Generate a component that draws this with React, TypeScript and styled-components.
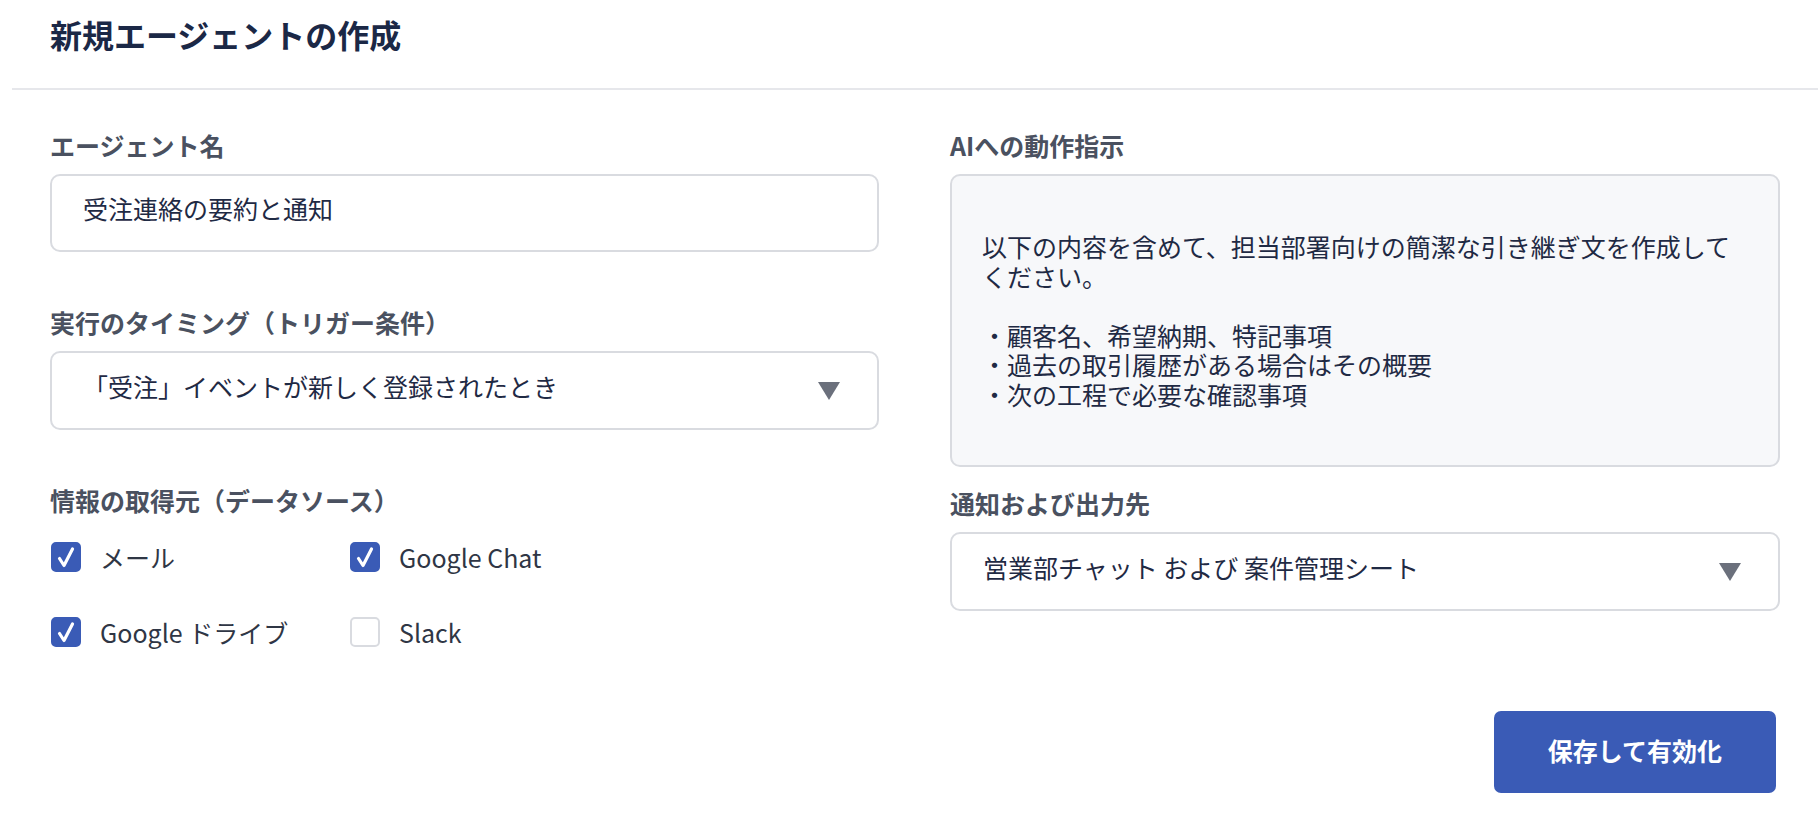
import React from "react";
import styled, { createGlobalStyle } from "styled-components";

const GlobalStyle = createGlobalStyle`
  html, body {
    margin: 0;
    padding: 0;
    background: #ffffff;
  }
  body {
    font-family: "Noto Sans CJK JP", "Noto Sans", sans-serif;
    color: #1f2a44;
  }
  * {
    box-sizing: border-box;
  }
`;

const sources = [
  { label: "メール", checked: true },
  { label: "Google Chat", checked: true },
  { label: "Google ドライブ", checked: true },
  { label: "Slack", checked: false },
];

const instruction = `以下の内容を含めて、担当部署向けの簡潔な引き継ぎ文を作成してください。

・顧客名、希望納期、特記事項
・過去の取引履歴がある場合はその概要
・次の工程で必要な確認事項`;

const Caret = () => (
  <svg width="22" height="18" viewBox="0 0 22 18">
    <polygon points="0,0 22,0 11,18" fill="#6b707c" />
  </svg>
);

const Tick = () => (
  <svg width="20" height="22" viewBox="0 0 20 22">
    <path
      d="M3.5 12.5 L8 19.5 L16.5 3"
      fill="none"
      stroke="#ffffff"
      strokeWidth="3.2"
      strokeLinecap="round"
      strokeLinejoin="round"
    />
  </svg>
);

const App = () => {
  return (
    <>
      <GlobalStyle />
      <Page>
        <Header>
          <Title>新規エージェントの作成</Title>
        </Header>
        <Body>
          <Column $gap={53}>
            <Field>
              <Label>エージェント名</Label>
              <InputBox>受注連絡の要約と通知</InputBox>
            </Field>
            <Field>
              <Label>実行のタイミング（トリガー条件）</Label>
              <SelectBox>
                <span>「受注」イベントが新しく登録されたとき</span>
                <Caret />
              </SelectBox>
            </Field>
            <Field>
              <Label>情報の取得元（データソース）</Label>
              <CheckGrid>
                {sources.map((s) => (
                  <CheckItem key={s.label}>
                    <Box $checked={s.checked}>{s.checked && <Tick />}</Box>
                    <CheckText>{s.label}</CheckText>
                  </CheckItem>
                ))}
              </CheckGrid>
            </Field>
          </Column>
          <Column $gap={19}>
            <Field>
              <Label>AIへの動作指示</Label>
              <TextArea>
                <TextBody>{instruction}</TextBody>
              </TextArea>
            </Field>
            <Field>
              <Label>通知および出力先</Label>
              <SelectBox>
                <span>営業部チャット および 案件管理シート</span>
                <Caret />
              </SelectBox>
            </Field>
            <Footer>
              <SaveButton>保存して有効化</SaveButton>
            </Footer>
          </Column>
        </Body>
      </Page>
    </>
  );
};

export default App;

const Page = styled.div`
  width: 1818px;
  min-height: 816px;
  background: #ffffff;
`;

const Header = styled.header`
  margin-left: 12px;
  padding: 12px 0 32px 38px;
  border-bottom: 2px solid #e6e7eb;
`;

const Title = styled.h1`
  margin: 0;
  font-size: 32px;
  line-height: 44px;
  font-weight: 700;
  color: #1b2846;
`;

const Body = styled.main`
  display: grid;
  grid-template-columns: 829px 830px;
  column-gap: 71px;
  padding: 38px 0 0 50px;
`;

const Column = styled.div<{ $gap: number }>`
  display: flex;
  flex-direction: column;
  gap: ${({ $gap }) => $gap}px;
`;

const Field = styled.section`
  display: flex;
  flex-direction: column;
`;

const Label = styled.label`
  font-size: 25px;
  line-height: 34px;
  font-weight: 700;
  color: #4a5160;
  margin-bottom: 12px;
`;

const InputBox = styled.div`
  height: 78px;
  display: flex;
  align-items: center;
  padding: 0 31px 11px;
  border: 2px solid #d9dbe0;
  border-radius: 10px;
  font-size: 25px;
  color: #1f2a44;
  background: #ffffff;
`;

const SelectBox = styled(InputBox)`
  height: 79px;
  justify-content: space-between;
  padding: 0 37px 9px 31px;

  svg {
    margin-top: 9px;
  }
`;

const TextArea = styled.div`
  height: 293px;
  display: flex;
  align-items: center;
  padding: 0 30px;
  border: 2px solid #d9dbe0;
  border-radius: 10px;
  background: #f7f8fa;
`;

const TextBody = styled.p`
  margin: 0;
  white-space: pre-wrap;
  font-size: 25px;
  line-height: 29.5px;
  color: #1f2a44;
`;

const CheckGrid = styled.div`
  display: grid;
  grid-template-columns: 299px 280px;
  row-gap: 35px;
  margin-top: 8px;
  padding-left: 1px;
`;

const CheckItem = styled.div`
  display: flex;
  align-items: center;
  gap: 19px;
  height: 40px;
`;

const Box = styled.span<{ $checked: boolean }>`
  width: 30px;
  height: 30px;
  flex: none;
  display: flex;
  align-items: center;
  justify-content: center;
  border-radius: 5px;
  border: 2px solid ${({ $checked }) => ($checked ? "#3a5bb6" : "#d9dbe0")};
  background: ${({ $checked }) => ($checked ? "#3a5bb6" : "#ffffff")};
`;

const CheckText = styled.span`
  font-size: 25px;
  color: #2f3645;
`;

const Footer = styled.div`
  display: flex;
  justify-content: flex-end;
  margin-top: 81px;
  padding-right: 4px;
`;

const SaveButton = styled.button`
  width: 282px;
  height: 82px;
  border: none;
  border-radius: 7px;
  background: #3a5bb6;
  color: #ffffff;
  font-family: "Noto Sans CJK JP", sans-serif;
  font-size: 25px;
  font-weight: 700;
  padding-bottom: 6px;
  cursor: pointer;
`;
